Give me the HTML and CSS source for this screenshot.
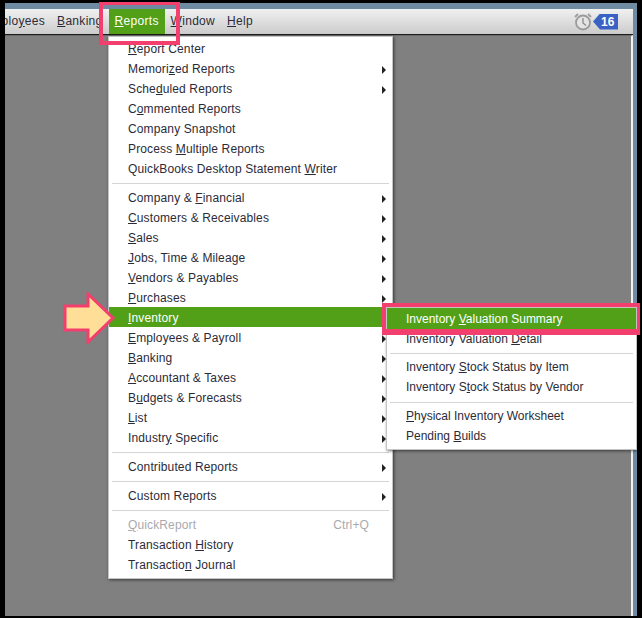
FILE: index.html
```html
<!DOCTYPE html>
<html lang="en">
<head>
<meta charset="utf-8">
<title>Reports menu</title>
<link rel="stylesheet" href="styles.css">
</head>
<body>
<div class="window">
  <div class="titlestrip"></div>
  <div class="menubar">
    <span class="mb-item mb-first">Emplo<u>y</u>ees</span>
    <span class="mb-item"><u>B</u>anking</span>
    <span class="mb-item mb-active"><u>R</u>eports</span>
    <span class="mb-item"><u>W</u>indow</span>
    <span class="mb-item"><u>H</u>elp</span>
    <span class="alerts">
      <svg class="clock" width="20" height="20" viewBox="0 0 20 20" aria-hidden="true">
        <circle cx="10" cy="10.5" r="7" fill="#e4e4e4" stroke="#9a9a9a" stroke-width="1.8"/>
        <path d="M10 6V11L13 13.5" fill="none" stroke="#8a8a8a" stroke-width="1.3"/>
        <path d="M2 5L5 2M18 5L15 2" fill="none" stroke="#a0a0a0" stroke-width="2"/>
      </svg>
      <span class="badge">16</span>
    </span>
  </div>
  <div class="workspace"></div>
</div>

<div class="menu main-menu">
  <div class="item"><span><u>R</u>eport Center</span></div>
  <div class="item sub"><span>Memori<u>z</u>ed Reports</span></div>
  <div class="item sub"><span>Sche<u>d</u>uled Reports</span></div>
  <div class="item"><span>C<u>o</u>mmented Reports</span></div>
  <div class="item"><span>Company Snapshot</span></div>
  <div class="item"><span>Process <u>M</u>ultiple Reports</span></div>
  <div class="item"><span>QuickBooks Desktop Statement <u>W</u>riter</span></div>
  <div class="sep"></div>
  <div class="item sub"><span>Company &amp; <u>F</u>inancial</span></div>
  <div class="item sub"><span><u>C</u>ustomers &amp; Receivables</span></div>
  <div class="item sub"><span><u>S</u>ales</span></div>
  <div class="item sub"><span><u>J</u>obs, Time &amp; Mileage</span></div>
  <div class="item sub"><span><u>V</u>endors &amp; Payables</span></div>
  <div class="item sub"><span><u>P</u>urchases</span></div>
  <div class="item sub active"><span><u>I</u>nventory</span></div>
  <div class="item sub"><span><u>E</u>mployees &amp; Payroll</span></div>
  <div class="item sub"><span><u>B</u>anking</span></div>
  <div class="item sub"><span><u>A</u>ccountant &amp; Taxes</span></div>
  <div class="item sub"><span>B<u>u</u>dgets &amp; Forecasts</span></div>
  <div class="item sub"><span><u>L</u>ist</span></div>
  <div class="item sub"><span>Industr<u>y</u> Specific</span></div>
  <div class="sep"></div>
  <div class="item sub"><span>Contributed Reports</span></div>
  <div class="sep"></div>
  <div class="item sub"><span>Custom Reports</span></div>
  <div class="sep"></div>
  <div class="item disabled"><span><u>Q</u>uickReport</span><span class="shortcut">Ctrl+Q</span></div>
  <div class="item"><span>Transaction <u>H</u>istory</span></div>
  <div class="item"><span>Transactio<u>n</u> Journal</span></div>
</div>

<div class="menu sub-menu">
  <div class="item active"><span>Inventory <u>V</u>aluation Summary</span></div>
  <div class="item"><span>Inventory Valuation <u>D</u>etail</span></div>
  <div class="sep"></div>
  <div class="item"><span>Inventory <u>S</u>tock Status by Item</span></div>
  <div class="item"><span>Inventory S<u>t</u>ock Status by Vendor</span></div>
  <div class="sep"></div>
  <div class="item"><span><u>P</u>hysical Inventory Worksheet</span></div>
  <div class="item"><span>Pending <u>B</u>uilds</span></div>
</div>

<div class="callout callout-reports"></div>
<div class="callout callout-summary"></div>
<svg class="pointer" width="54" height="52" viewBox="0 0 54 52" aria-hidden="true">
  <path d="M2 14H25V2L50 26L25 50V38H2Z" fill="#ffdf98" stroke="#f23f6d" stroke-width="3"/>
</svg>
</body>
</html>
```

FILE: styles.css
```css
* { box-sizing: border-box; }
html, body { margin: 0; height: 100%; overflow: hidden; background: #000; }
body {
  font-family: "Liberation Sans", Arial, sans-serif;
  font-size: 12px;
  letter-spacing: 0.13px;
  color: #2b2b38;
}
u { text-underline-offset: 1px; }

.window {
  display: flex;
  flex-direction: column;
  width: 632px;
  height: 613px;
  margin: 3px 0 0 5px;
  background: #6f8ba3;
  overflow: hidden;
}
.titlestrip { height: 6px; flex: none; }

.menubar {
  flex: none;
  display: flex;
  align-items: stretch;
  height: 26px;
  margin-right: 4px;
  background: linear-gradient(#f1f1f1, #cbcbcb);
  border-bottom: 1px solid #1c1c1c;
  line-height: 25px;
  letter-spacing: 0.3px;
  white-space: nowrap;
}
.mb-item { padding: 0 6px; }
.mb-first { margin-left: -28px; }
.mb-active { width: 56px; background: #52a018; color: #fff; text-align: center; }
.alerts { margin-left: auto; display: flex; align-items: center; padding-right: 15px; }
.badge {
  display: block;
  width: 25px;
  height: 16px;
  line-height: 16px;
  padding-left: 8px;
  background: #3a62c4;
  color: #fff;
  font-weight: 700;
  letter-spacing: 0;
  clip-path: polygon(0 50%, 7px 0, 100% 0, 100% 100%, 7px 100%);
}

.workspace {
  flex: 1;
  margin-right: 4px;
  background: #808080;
  border-top: 1px solid #6a6a6a;
  border-right: 2px solid #f2f2f2;
}

.menu {
  position: absolute;
  background: #fff;
  border: 1px solid #c4c4c4;
  box-shadow: 1px 1px 3px rgba(0, 0, 0, 0.55);
}
.main-menu { left: 108px; top: 36px; width: 285px; height: 543px; padding-top: 1px; }
.sub-menu { left: 386px; top: 307px; width: 251px; height: 143px; letter-spacing: 0; }

.item {
  position: relative;
  display: flex;
  justify-content: space-between;
  align-items: center;
  height: 20px;
  padding: 2px 30px 0 19px;
  white-space: nowrap;
}
.sub-menu .item { padding-top: 0; }
.sub-menu .item.active { height: 21px; }
.sub-menu .item.active + .item { height: 19px; }
.item.sub::after {
  content: "";
  position: absolute;
  right: 6px;
  top: 8px;
  border-left: 4px solid #222;
  border-top: 4px solid transparent;
  border-bottom: 4px solid transparent;
}
.item.active { background: #52a018; color: #fff; }
.item.disabled { color: #a9a9ae; }
.shortcut { margin-right: -7px; }

.sep {
  height: 9px;
  margin: 0 3px;
  background: linear-gradient(#d4d4d4, #d4d4d4) 0 5px / 100% 1px no-repeat;
}

.callout {
  position: absolute;
  border: 4px solid #f23f6d;
}
.callout-reports { left: 99px; top: 2px; width: 81px; height: 43px; border-top-width: 3px; }
.callout-summary { left: 382px; top: 303px; width: 258px; height: 32px; border-right-width: 3px; border-bottom-width: 6px; }
.pointer { position: absolute; left: 63px; top: 292px; }
```
